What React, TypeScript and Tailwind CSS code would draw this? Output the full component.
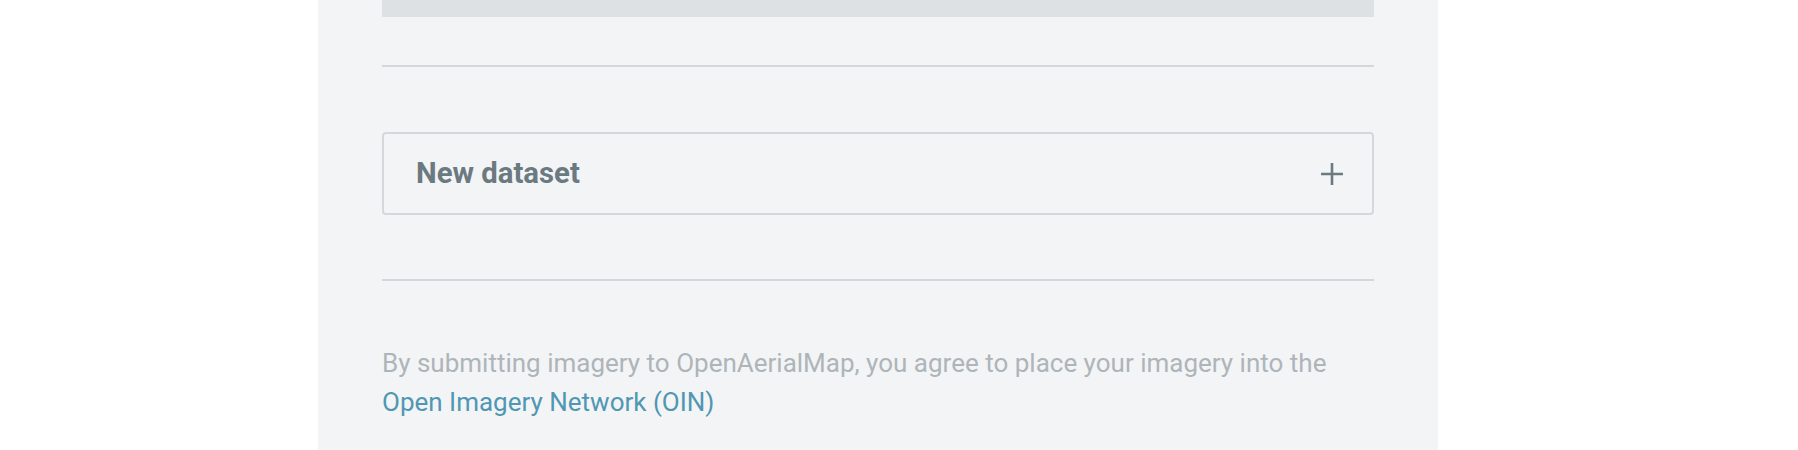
import React from "react";

const PlusIcon = () => (
  <svg width="22" height="22" viewBox="0 0 22 22" fill="none" aria-hidden="true">
    <path d="M11 0v22M0 11h22" stroke="#6b7a80" strokeWidth="2.6" />
  </svg>
);

const App: React.FC = () => {
  return (
    <div className="min-h-screen bg-white" style={{ fontFamily: "Roboto, 'Liberation Sans', sans-serif" }}>
      <div className="ml-[318px] w-[1120px] h-[450px] bg-[#f3f4f6] px-16 overflow-hidden">
        {/* bottom of the previous dataset block */}
        <div className="h-[17px] bg-[#dee1e4]" />

        <div className="mt-12 border-t-2 border-[#d3d9db]" />

        <button
          type="button"
          className="mt-[65px] flex h-[83px] w-full items-center justify-between rounded-[4px] border-2 border-[#d3d9db] pl-[32px] pr-[29px] text-left"
        >
          <span className="text-[29.3px] font-bold leading-none text-[#6b7a80]">New dataset</span>
          <PlusIcon />
        </button>

        <div className="mt-[64px] border-t-2 border-[#d3d9db]" />

        <p className="mt-[63px] text-[26px] leading-[39px] text-[#aeb5b9]">
          By submitting imagery to OpenAerialMap, you agree to place your imagery into the{" "}
          <a href="#" className="text-[#4f97b2]">
            Open Imagery Network (OIN)
          </a>
        </p>
      </div>
    </div>
  );
};

export default App;
